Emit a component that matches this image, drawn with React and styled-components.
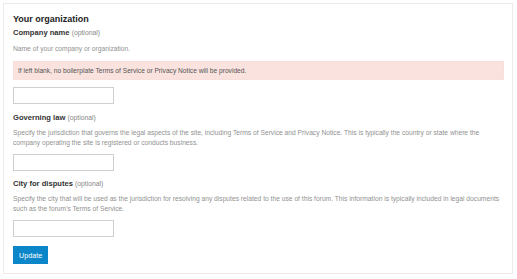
import React from 'react'
import styled, { createGlobalStyle } from 'styled-components'

const Global = createGlobalStyle`
  html, body {
    margin: 0;
    padding: 0;
    background: #fff;
  }
  body {
    font-family: "Liberation Sans", Arial, sans-serif;
    color: #222;
  }
`

const Panel = styled.div`
  margin: 3px 0 0 3px;
  width: 510px;
  box-sizing: border-box;
  border: 1px solid #ebebeb;
  padding: 9px 8px 9px 9px;
`

const Title = styled.h2`
  margin: 0 0 3px;
  font-size: 9px;
  line-height: 12px;
  font-weight: bold;
  color: #222;
`

const Field = styled.div`
  margin-top: ${p => p.gap ?? 8}px;
`

const Label = styled.div`
  font-size: 7.6px;
  line-height: 10px;
  font-weight: bold;
  color: #333;
`

const Optional = styled.span`
  font-size: 6.8px;
  font-weight: normal;
  color: #888;
`

const Desc = styled.div`
  margin-top: ${p => p.gap || 5}px;
  max-width: 489px;
  font-size: 6.7px;
  line-height: 10px;
  color: #919191;
`

const Banner = styled.div`
  margin-top: 7px;
  height: 19px;
  display: flex;
  align-items: center;
  padding: 0 4px;
  background: #fae3df;
  border: 1px solid #f9e0dc;
  box-sizing: border-box;
  font-size: 6.65px;
  color: #555;
`

const Input = styled.input`
  display: block;
  margin-top: ${p => p.gap || 6}px;
  width: 101px;
  height: 17px;
  box-sizing: border-box;
  border: 1px solid #cfcfcf;
  padding: 0 4px;
  font-size: 7px;
  outline: none;
`

const Button = styled.button`
  display: block;
  margin-top: 9px;
  height: 18px;
  padding: 0 6px;
  border: none;
  background: #0a86c9;
  color: #fff;
  font-family: "Liberation Sans", Arial, sans-serif;
  font-size: 7.2px;
  cursor: pointer;
`

const fields = [
  {
    label: 'Governing law',
    gap: 9,
    desc: 'Specify the jurisdiction that governs the legal aspects of the site, including Terms of Service and Privacy Notice. This is typically the country or state where the company operating the site is registered or conducts business.'
  },
  {
    label: 'City for disputes',
    gap: 8,
    desc: "Specify the city that will be used as the jurisdiction for resolving any disputes related to the use of this forum. This information is typically included in legal documents such as the forum's Terms of Service."
  }
]

export default function App () {
  return (
    <>
      <Global />
      <Panel>
        <Title>Your organization</Title>
        <Field gap={0}>
          <Label>Company name <Optional>(optional)</Optional></Label>
          <Desc gap={6}>Name of your company or organization.</Desc>
          <Banner>If left blank, no boilerplate Terms of Service or Privacy Notice will be provided.</Banner>
          <Input type='text' gap={7} />
        </Field>
        {fields.map(f => (
          <Field key={f.label} gap={f.gap}>
            <Label>{f.label} <Optional>(optional)</Optional></Label>
            <Desc>{f.desc}</Desc>
            <Input type='text' />
          </Field>
        ))}
        <Button>Update</Button>
      </Panel>
    </>
  )
}
